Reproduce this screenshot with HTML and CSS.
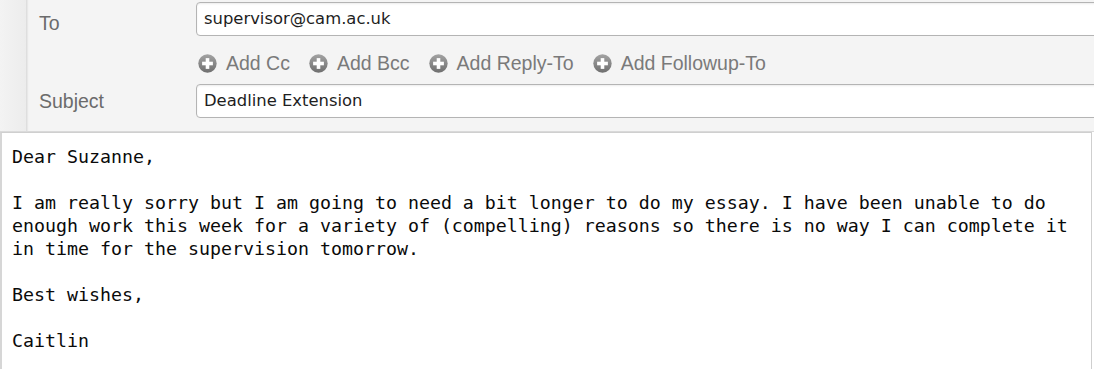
FILE: index.html
```html
<!DOCTYPE html>
<html lang="en">
<head>
<meta charset="utf-8">
<title>Compose</title>
<link rel="stylesheet" href="styles.css">
</head>
<body>
<div class="compose">
  <div class="header">
    <div class="gutter"></div>
    <div class="fields">
      <div class="row row-to">
        <label class="label label-to">To</label>
        <div class="input">supervisor@cam.ac.uk</div>
      </div>
      <div class="add-row">
        <span class="add"><svg class="plus" viewBox="0 0 18 18" width="19" height="19"><defs><linearGradient id="g" x1="0" y1="0" x2="0" y2="1"><stop offset="0" stop-color="#a3a3a3"/><stop offset="1" stop-color="#6f6f6f"/></linearGradient></defs><circle cx="9" cy="9" r="8.7" fill="url(#g)"/><rect x="3.9" y="7.3" width="10.2" height="3.4" fill="#fff"/><rect x="7.3" y="3.9" width="3.4" height="10.2" fill="#fff"/></svg>Add Cc</span>
        <span class="add"><svg class="plus" viewBox="0 0 18 18" width="19" height="19"><circle cx="9" cy="9" r="8.7" fill="url(#g)"/><rect x="3.9" y="7.3" width="10.2" height="3.4" fill="#fff"/><rect x="7.3" y="3.9" width="3.4" height="10.2" fill="#fff"/></svg>Add Bcc</span>
        <span class="add"><svg class="plus" viewBox="0 0 18 18" width="19" height="19"><circle cx="9" cy="9" r="8.7" fill="url(#g)"/><rect x="3.9" y="7.3" width="10.2" height="3.4" fill="#fff"/><rect x="7.3" y="3.9" width="3.4" height="10.2" fill="#fff"/></svg>Add Reply-To</span>
        <span class="add"><svg class="plus" viewBox="0 0 18 18" width="19" height="19"><circle cx="9" cy="9" r="8.7" fill="url(#g)"/><rect x="3.9" y="7.3" width="10.2" height="3.4" fill="#fff"/><rect x="7.3" y="3.9" width="3.4" height="10.2" fill="#fff"/></svg>Add Followup-To</span>
      </div>
      <div class="row row-subject">
        <label class="label">Subject</label>
        <div class="input">Deadline Extension</div>
      </div>
    </div>
  </div>
  <div class="body">Dear Suzanne,

I am really sorry but I am going to need a bit longer to do my essay. I have been unable to do
enough work this week for a variety of (compelling) reasons so there is no way I can complete it
in time for the supervision tomorrow.

Best wishes,

Caitlin</div>
</div>
</body>
</html>
```

FILE: styles.css
```css
html, body {
  margin: 0;
  padding: 0;
  background: #ffffff;
  overflow: hidden;
}

.compose {
  width: 1094px;
  height: 369px;
  overflow: hidden;
}

.header {
  display: flex;
  height: 131px;
  background: #f4f4f4;
  border-bottom: 1px solid #d9d9d9;
}

.gutter {
  width: 26px;
  flex: none;
  background: linear-gradient(to right, #f3f3f3, #ececec);
  border-right: 1px solid #dedede;
  box-shadow: 1px 0 1px #e8e8e8;
}

.fields {
  flex: 1;
  padding: 2px 0 0 12px;
  overflow: hidden;
}

.row {
  display: flex;
}

.row-to {
  align-items: flex-start;
}

.row-subject {
  align-items: center;
}

.label {
  width: 157px;
  flex: none;
  font-family: "Liberation Sans", Arial, sans-serif;
  font-size: 19.5px;
  line-height: 22px;
  color: #6b6b6b;
}

.label-to {
  padding-top: 10px;
}

.input {
  flex: 1;
  margin-right: -20px;
  box-sizing: border-box;
  height: 34px;
  border: 1px solid #b4b4b4;
  border-radius: 4px;
  background: #ffffff;
  box-shadow: inset 0 1px 2px rgba(0, 0, 0, 0.08);
  padding: 0 7px;
  font-family: "DejaVu Sans", Verdana, sans-serif;
  font-size: 16.4px;
  line-height: 32px;
  color: #1e1e1e;
}

.add-row {
  display: flex;
  align-items: center;
  gap: 19px;
  height: 22px;
  margin: 16px 0 10px;
  padding-left: 159px;
}

.add {
  display: inline-flex;
  align-items: center;
  font-family: "Liberation Sans", Arial, sans-serif;
  font-size: 19.5px;
  line-height: 22px;
  color: #7a7a7a;
  white-space: nowrap;
}

.plus {
  display: block;
  margin-right: 9px;
  flex: none;
}

.body {
  box-sizing: border-box;
  width: 1092px;
  height: 260px;
  border: 1px solid #cfcfcf;
  border-left: 2px solid #d6d6d6;
  background: #ffffff;
  padding: 12px 10px 0 10px;
  font-family: "DejaVu Sans Mono", "Liberation Mono", monospace;
  font-size: 18.27px;
  line-height: 23px;
  color: #0a0a0a;
  white-space: pre;
}
```
